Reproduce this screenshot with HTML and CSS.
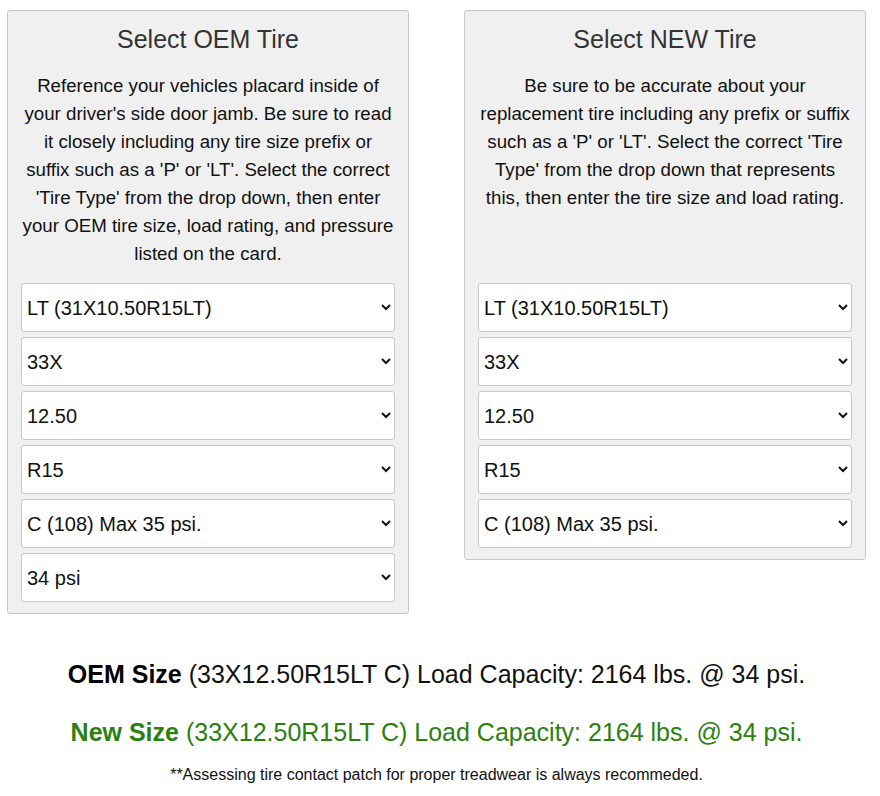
FILE: index.html
```html
<!DOCTYPE html>
<html lang="en">
<head>
  <meta charset="UTF-8">
  <meta name="viewport" content="width=device-width, initial-scale=1.0">
  <title>Tire Load Calculator</title>
  <link rel="stylesheet" href="styles.css">
</head>
<body>

<div class="panels">
  <div class="panel oem">
    <h2>Select OEM Tire</h2>
    <p class="info">Reference your vehicles placard inside of your driver's side door jamb. Be sure to read it closely including any tire size prefix or suffix such as a 'P' or 'LT'. Select the correct 'Tire Type' from the drop down, then enter your OEM tire size, load rating, and pressure listed on the card.</p>
    <select><option>LT (31X10.50R15LT)</option></select>
    <select><option>33X</option></select>
    <select><option>12.50</option></select>
    <select><option>R15</option></select>
    <select><option>C (108) Max 35 psi.</option></select>
    <select><option>34 psi</option></select>
  </div>

  <div class="panel new">
    <h2>Select NEW Tire</h2>
    <p class="info">Be sure to be accurate about your replacement tire including any prefix or suffix such as a 'P' or 'LT'. Select the correct 'Tire Type' from the drop down that represents this, then enter the tire size and load rating.</p>
    <select><option>LT (31X10.50R15LT)</option></select>
    <select><option>33X</option></select>
    <select><option>12.50</option></select>
    <select><option>R15</option></select>
    <select><option>C (108) Max 35 psi.</option></select>
  </div>
</div>

<div class="results">
  <p class="result"><b>OEM Size</b> (33X12.50R15LT C) Load Capacity: 2164 lbs. @ 34 psi.</p>
  <p class="result green"><b>New Size</b> (33X12.50R15LT C) Load Capacity: 2164 lbs. @ 34 psi.</p>
  <p class="note">**Assessing tire contact patch for proper treadwear is always recommeded.</p>
</div>

</body>
</html>
```

FILE: styles.css
```css
* {
  margin: 0;
  padding: 0;
  box-sizing: border-box;
  font-family: 'Liberation Sans', Arial, sans-serif;
}

body {
  background: #fff;
  color: #111;
  padding: 10px 14px 0 7px;
}

.panels {
  display: flex;
  justify-content: space-between;
  align-items: flex-start;
}

.panel {
  width: 402px;
  background-color: #f0f0f0;
  border: 1px solid #c8c8c8;
  border-radius: 3px;
  padding: 13px 13px 11px 13px;
  text-align: center;
}

h2 {
  font-size: 25px;
  font-weight: normal;
  color: #333;
  line-height: 30px;
  margin-bottom: 18px;
}

.info {
  font-size: 18.7px;
  line-height: 28px;
  color: #111;
  min-height: 196px;
  margin-bottom: 15px;
}

select {
  display: block;
  width: 100%;
  height: 49px;
  margin-bottom: 5px;
  padding: 0 0 0 1px;
  font-size: 20px;
  color: #111;
  background-color: #fff;
  border: 1px solid #c8c8c8;
  border-radius: 3px;
}

select:last-child {
  margin-bottom: 0;
}

.results {
  text-align: center;
  padding-top: 45px;
}

.result {
  font-size: 25px;
  line-height: 30px;
  margin-bottom: 28px;
}

.result b {
  color: #000;
}

.green {
  color: #2b800e;
  margin-bottom: 19px;
}

.green b {
  color: #2b800e;
}

.note {
  font-size: 16px;
  color: #111;
}
```
